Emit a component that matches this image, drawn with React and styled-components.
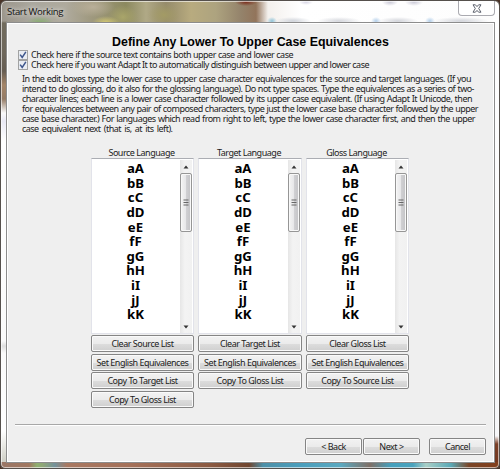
import React from "react";
import styled, { createGlobalStyle } from "styled-components";

const Global = createGlobalStyle`
  * { box-sizing: border-box; }
  body { margin: 0; background: #4a3428; overflow: hidden; }
`;

const Window = styled.div`
  width: 500px;
  height: 469px;
  display: flex;
  flex-direction: column;
  padding: 0 4px 5px 4px;
  border: 1px solid #55504c;
  border-radius: 6px 6px 5px 5px;
  box-shadow: inset 0 0 0 1px rgba(255, 255, 255, 0.6);
  font-family: "Noto Sans", sans-serif;
  font-size: 9px;
  color: #1c1c1c;
  background:
    linear-gradient(90deg, #9a7766 0, #a17760 28px, #8fb070 36px, #8fa678 42px, #74929b 54px, #a97962 66px, #a57159 130px, #8b5a42 210px, #704630 248px, #4d90a8 262px, #4b9fbd 300px, #5ba9c0 340px, #7f6f66 369px, #45a0bd 390px, #4aa3bd 412px, #a9cfc7 425px, #5aa9b6 450px, #7a4527 468px, #833f1c 100%) 0 461px / 100% 8px no-repeat,
    linear-gradient(180deg, transparent 0, transparent 20px, #716b5d 22px, #6e675b 52px, #665d52 70px, #a48568 84px, #947b65 98px, #fafafa 112px, #e9e9f5 120px, #ffffff 140px, #fafafa 340px, #dedede 345px, #fafafa 352px, #ffffff 430px, #c6c6ba 100%) 0 0 / 6px 100% no-repeat,
    linear-gradient(180deg, #ffffff 0, #f7f7f9 435px, #7b4028 443px, #70351d 100%) 100% 0 / 6px 100% no-repeat,
    radial-gradient(ellipse 14px 7px at 39px 22px, #84ae6d 0, transparent 100%),
    radial-gradient(ellipse 14px 7px at 105px 22px, #d8cd73 0, transparent 100%),
    radial-gradient(ellipse 22px 10px at 92px 6px, #b9af99 0, transparent 100%),
    radial-gradient(ellipse 15px 12px at 122px 16px, #a9a56a 0, transparent 100%),
    radial-gradient(ellipse 16px 12px at 163px 14px, #a39b65 0, transparent 100%),
    radial-gradient(ellipse 11px 4px at 245px 1px, #7a2d1c 0, transparent 100%),
    radial-gradient(ellipse 7px 3px at 305px 1px, #d6d4e4 0, transparent 100%),
    radial-gradient(ellipse 8px 4px at 389px 1px, #c9c8d6 0, transparent 100%),
    radial-gradient(ellipse 9px 4px at 413px 1px, #c9c8d6 0, transparent 100%),
    radial-gradient(ellipse 5px 4px at 271px 20px, #8fc3d8 0, transparent 100%),
    radial-gradient(ellipse 18px 4px at 292px 20px, #cfd3da 0, transparent 100%),
    radial-gradient(ellipse 22px 4px at 338px 20px, #d4d6dc 0, transparent 100%),
    radial-gradient(ellipse 5px 4px at 375px 20px, #b3cfea 0, transparent 100%),
    radial-gradient(ellipse 20px 4px at 397px 20px, #d2d4da 0, transparent 100%),
    radial-gradient(ellipse 5px 4px at 429px 20px, #b3cfea 0, transparent 100%),
    radial-gradient(ellipse 28px 4px at 460px 20px, #d2d4da 0, transparent 100%),
    linear-gradient(90deg, #9b958b 0, #aaa79e 30px, #afaa9d 65px, #9f997f 90px, #8c895f 125px, #b0a986 145px, #958b6b 165px, #b8ab7f 190px, #ada37f 215px, #94836b 240px, #92745b 255px, #f3f0ed 267px, #ffffff 300px, #fdfdfd 100%);
`;

const TitleBar = styled.header`
  height: 21px;
  flex: none;
  display: flex;
  justify-content: space-between;
  align-items: flex-start;
`;

const Title = styled.div`
  padding-left: 2px;
  line-height: 22px;
  font-family: "Open Sans", sans-serif;
  font-size: 9.6px;
  letter-spacing: -0.38px;
  white-space: nowrap;
  color: #111;
  text-shadow: 0 0 4px rgba(255, 255, 255, 0.7), 0 0 7px rgba(255, 255, 255, 0.5);
`;

const CloseButton = styled.button`
  width: 37px;
  height: 15px;
  padding: 0;
  display: flex;
  align-items: center;
  justify-content: center;
  border: 1px solid #aaaab0;
  border-top: 0;
  border-radius: 0 0 4px 4px;
  background: rgba(255, 255, 255, 0.75);
`;

const Body = styled.main`
  flex: 1;
  display: flex;
  flex-direction: column;
  min-height: 0;
  margin-left: 1px;
  padding: 11px 8px 0 8px;
  border: 1px solid #8c8c8c;
  box-shadow: inset 0 0 0 1px #ffffff;
  background: #efefef;
`;

const Heading = styled.h1`
  margin: 0;
  height: 16px;
  line-height: 16px;
  text-align: center;
  font-family: "Liberation Sans", Arial, sans-serif;
  font-size: 12.4px;
  font-weight: bold;
  white-space: nowrap;
  color: #000;
`;

const CheckRow = styled.label`
  height: 10px;
  margin-left: 3px;
  display: flex;
  align-items: center;
  gap: 3px;
`;

const CheckBox = styled.span`
  width: 10px;
  height: 10px;
  flex: none;
  display: flex;
  border: 1px solid #a2a3a3;
  background: #e9edf3;
`;

const Line = styled.span`
  display: block;
  width: ${(p) => p.$width}px;
  height: 10px;
  line-height: 10px;
  letter-spacing: -0.52px;
  white-space: nowrap;
  text-align: justify;
  text-align-last: justify;
`;

const Paragraph = styled.div`
  margin: 4px 0 0 7px;
`;

const Columns = styled.div`
  display: grid;
  grid-template-columns: repeat(3, 103.6px);
  column-gap: 3.9px;
  margin: 14px 0 0 75.7px;
`;

const Column = styled.section`
  display: flex;
  flex-direction: column;
`;

const Caption = styled.div`
  height: 10px;
  line-height: 10px;
  padding-right: 2px;
  text-align: center;
  letter-spacing: -0.48px;
  white-space: nowrap;
`;

const ListBox = styled.div`
  height: 176px;
  display: flex;
  border: 1px solid #e2e3ea;
  border-top-color: #abadb3;
  background: #fff;
`;

const Entries = styled.div`
  flex: 1;
  padding: 2px 1px 0 0;
  text-align: center;
  font-size: 13.2px;
  font-weight: bold;
  color: #000;
`;

const Entry = styled.div`
  height: 14.65px;
  line-height: 14.65px;
`;

const ScrollBar = styled.div`
  width: 12px;
  margin: 1px 1px 0 0;
  display: flex;
  flex-direction: column;
  background: linear-gradient(90deg, #e6e6e6, #f3f3f3 40%, #f1f1f1);
`;

const ArrowBox = styled.div`
  height: 13px;
  display: flex;
  align-items: center;
  justify-content: center;
`;

const Thumb = styled.div`
  height: 59px;
  display: flex;
  align-items: center;
  justify-content: center;
  border: 1px solid #969696;
  border-radius: 2px;
  box-shadow: inset 0 0 0 1px #f8f8f8;
  background: linear-gradient(90deg, #f4f4f4 0, #e8e8ea 45%, #cfcfd2 55%, #c3c3c6 100%);
`;

const Track = styled.div`
  flex: 1;
`;

const ButtonStack = styled.div`
  display: flex;
  flex-direction: column;
  gap: 1.6px;
  margin-top: 1px;
`;

const PushButton = styled.button`
  width: ${(p) => (p.$width ? p.$width + "px" : "100%")};
  height: 17px;
  padding: 0;
  display: flex;
  align-items: center;
  justify-content: center;
  border: 1px solid #858585;
  border-radius: 2px;
  box-shadow: inset 0 0 0 1px #fafafa;
  background: linear-gradient(180deg, #f2f2f2 0, #ebebeb 50%, #dddddd 51%, #cfcfcf 100%);
  font: inherit;
  letter-spacing: -0.48px;
  white-space: nowrap;
  color: #1c1c1c;
`;

const Footer = styled.footer`
  display: flex;
  justify-content: flex-end;
  margin-top: auto;
  margin-bottom: 7px;
  padding-top: 13px;
  border-top: 1px solid #a8a8a8;
  box-shadow: inset 0 1px 0 #fff;
`;

const Gap = styled.div`
  width: ${(p) => p.$width}px;
`;

const CheckMark = () => (
  <svg width="8" height="8" viewBox="0 0 7 7">
    <path d="M1 3.2L2.8 5.6L6 0.8" fill="none" stroke="#3d558c" strokeWidth="1.3" />
  </svg>
);

const CloseIcon = () => (
  <svg width="10" height="9" viewBox="0 0 10 9">
    <path
      d="M1 0.8H3.4L5 2.6L6.6 0.8H9L6.7 4.5L9 8.2H6.6L5 6.4L3.4 8.2H1L3.3 4.5Z"
      fill="#fff"
      stroke="#5c606c"
      strokeWidth="1"
      strokeLinejoin="round"
    />
  </svg>
);

const Arrow = ({ down }) => (
  <svg width="6" height="4" viewBox="0 0 6 4">
    <path d={down ? "M0.5 0.5H5.5L3 3.5Z" : "M0.5 3.5H5.5L3 0.5Z"} fill="#333" />
  </svg>
);

const Grip = () => (
  <svg width="6" height="7" viewBox="0 0 6 7">
    <path d="M0.5 1H5.5M0.5 3.5H5.5M0.5 6H5.5" stroke="#666" strokeWidth="1" />
  </svg>
);

const checks = [
  { text: "Check here if the source text contains both upper case and lower case", width: 262 },
  { text: "Check here if you want Adapt It to automatically distinguish between upper and lower case", width: 338 },
];

const lines = [
  ["In the edit boxes type the lower case to upper case character equivalences for the source and target languages. (If you", 449],
  ["intend to do glossing, do it also for the glossing language). Do not type spaces. Type the equivalences as a series of two-", 452],
  ["character lines; each line is a lower case character followed by its upper case equivalent. (If using Adapt It Unicode, then", 450],
  ["for equivalences between any pair of composed characters, type just the lower case base character followed by the upper", 456],
  ["case base character.) For languages which read from right to left, type the lower case character first, and then the upper", 453],
  ["case equivalent next (that is, at its left).", 150.5],
];

const pairs = ["aA", "bB", "cC", "dD", "eE", "fF", "gG", "hH", "iI", "jJ", "kK"];

const columns = [
  { name: "Source Language", buttons: ["Clear Source List", "Set English Equivalences", "Copy To Target List", "Copy To Gloss List"] },
  { name: "Target Language", buttons: ["Clear Target List", "Set English Equivalences", "Copy To Gloss List"] },
  { name: "Gloss Language", buttons: ["Clear Gloss List", "Set English Equivalences", "Copy To Source List"] },
];

export default function App() {
  return (
    <>
      <Global />
      <Window>
        <TitleBar>
          <Title>Start Working</Title>
          <CloseButton aria-label="Close">
            <CloseIcon />
          </CloseButton>
        </TitleBar>
        <Body>
          <Heading>Define Any Lower To Upper Case Equivalences</Heading>
          {checks.map((c) => (
            <CheckRow key={c.text}>
              <CheckBox>
                <CheckMark />
              </CheckBox>
              <Line $width={c.width}>{c.text}</Line>
            </CheckRow>
          ))}
          <Paragraph>
            {lines.map(([text, width]) => (
              <Line key={text} $width={width}>
                {text}
              </Line>
            ))}
          </Paragraph>
          <Columns>
            {columns.map((col) => (
              <Column key={col.name}>
                <Caption>{col.name}</Caption>
                <ListBox>
                  <Entries>
                    {pairs.map((p) => (
                      <Entry key={p}>{p}</Entry>
                    ))}
                  </Entries>
                  <ScrollBar>
                    <ArrowBox>
                      <Arrow />
                    </ArrowBox>
                    <Thumb>
                      <Grip />
                    </Thumb>
                    <Track />
                    <ArrowBox>
                      <Arrow down />
                    </ArrowBox>
                  </ScrollBar>
                </ListBox>
                <ButtonStack>
                  {col.buttons.map((b) => (
                    <PushButton key={b}>{b}</PushButton>
                  ))}
                </ButtonStack>
              </Column>
            ))}
          </Columns>
          <Footer>
            <PushButton $width={57}>&lt; Back</PushButton>
            <Gap $width={1} />
            <PushButton $width={57}>Next &gt;</PushButton>
            <Gap $width={9} />
            <PushButton $width={57}>Cancel</PushButton>
          </Footer>
        </Body>
      </Window>
    </>
  );
}
